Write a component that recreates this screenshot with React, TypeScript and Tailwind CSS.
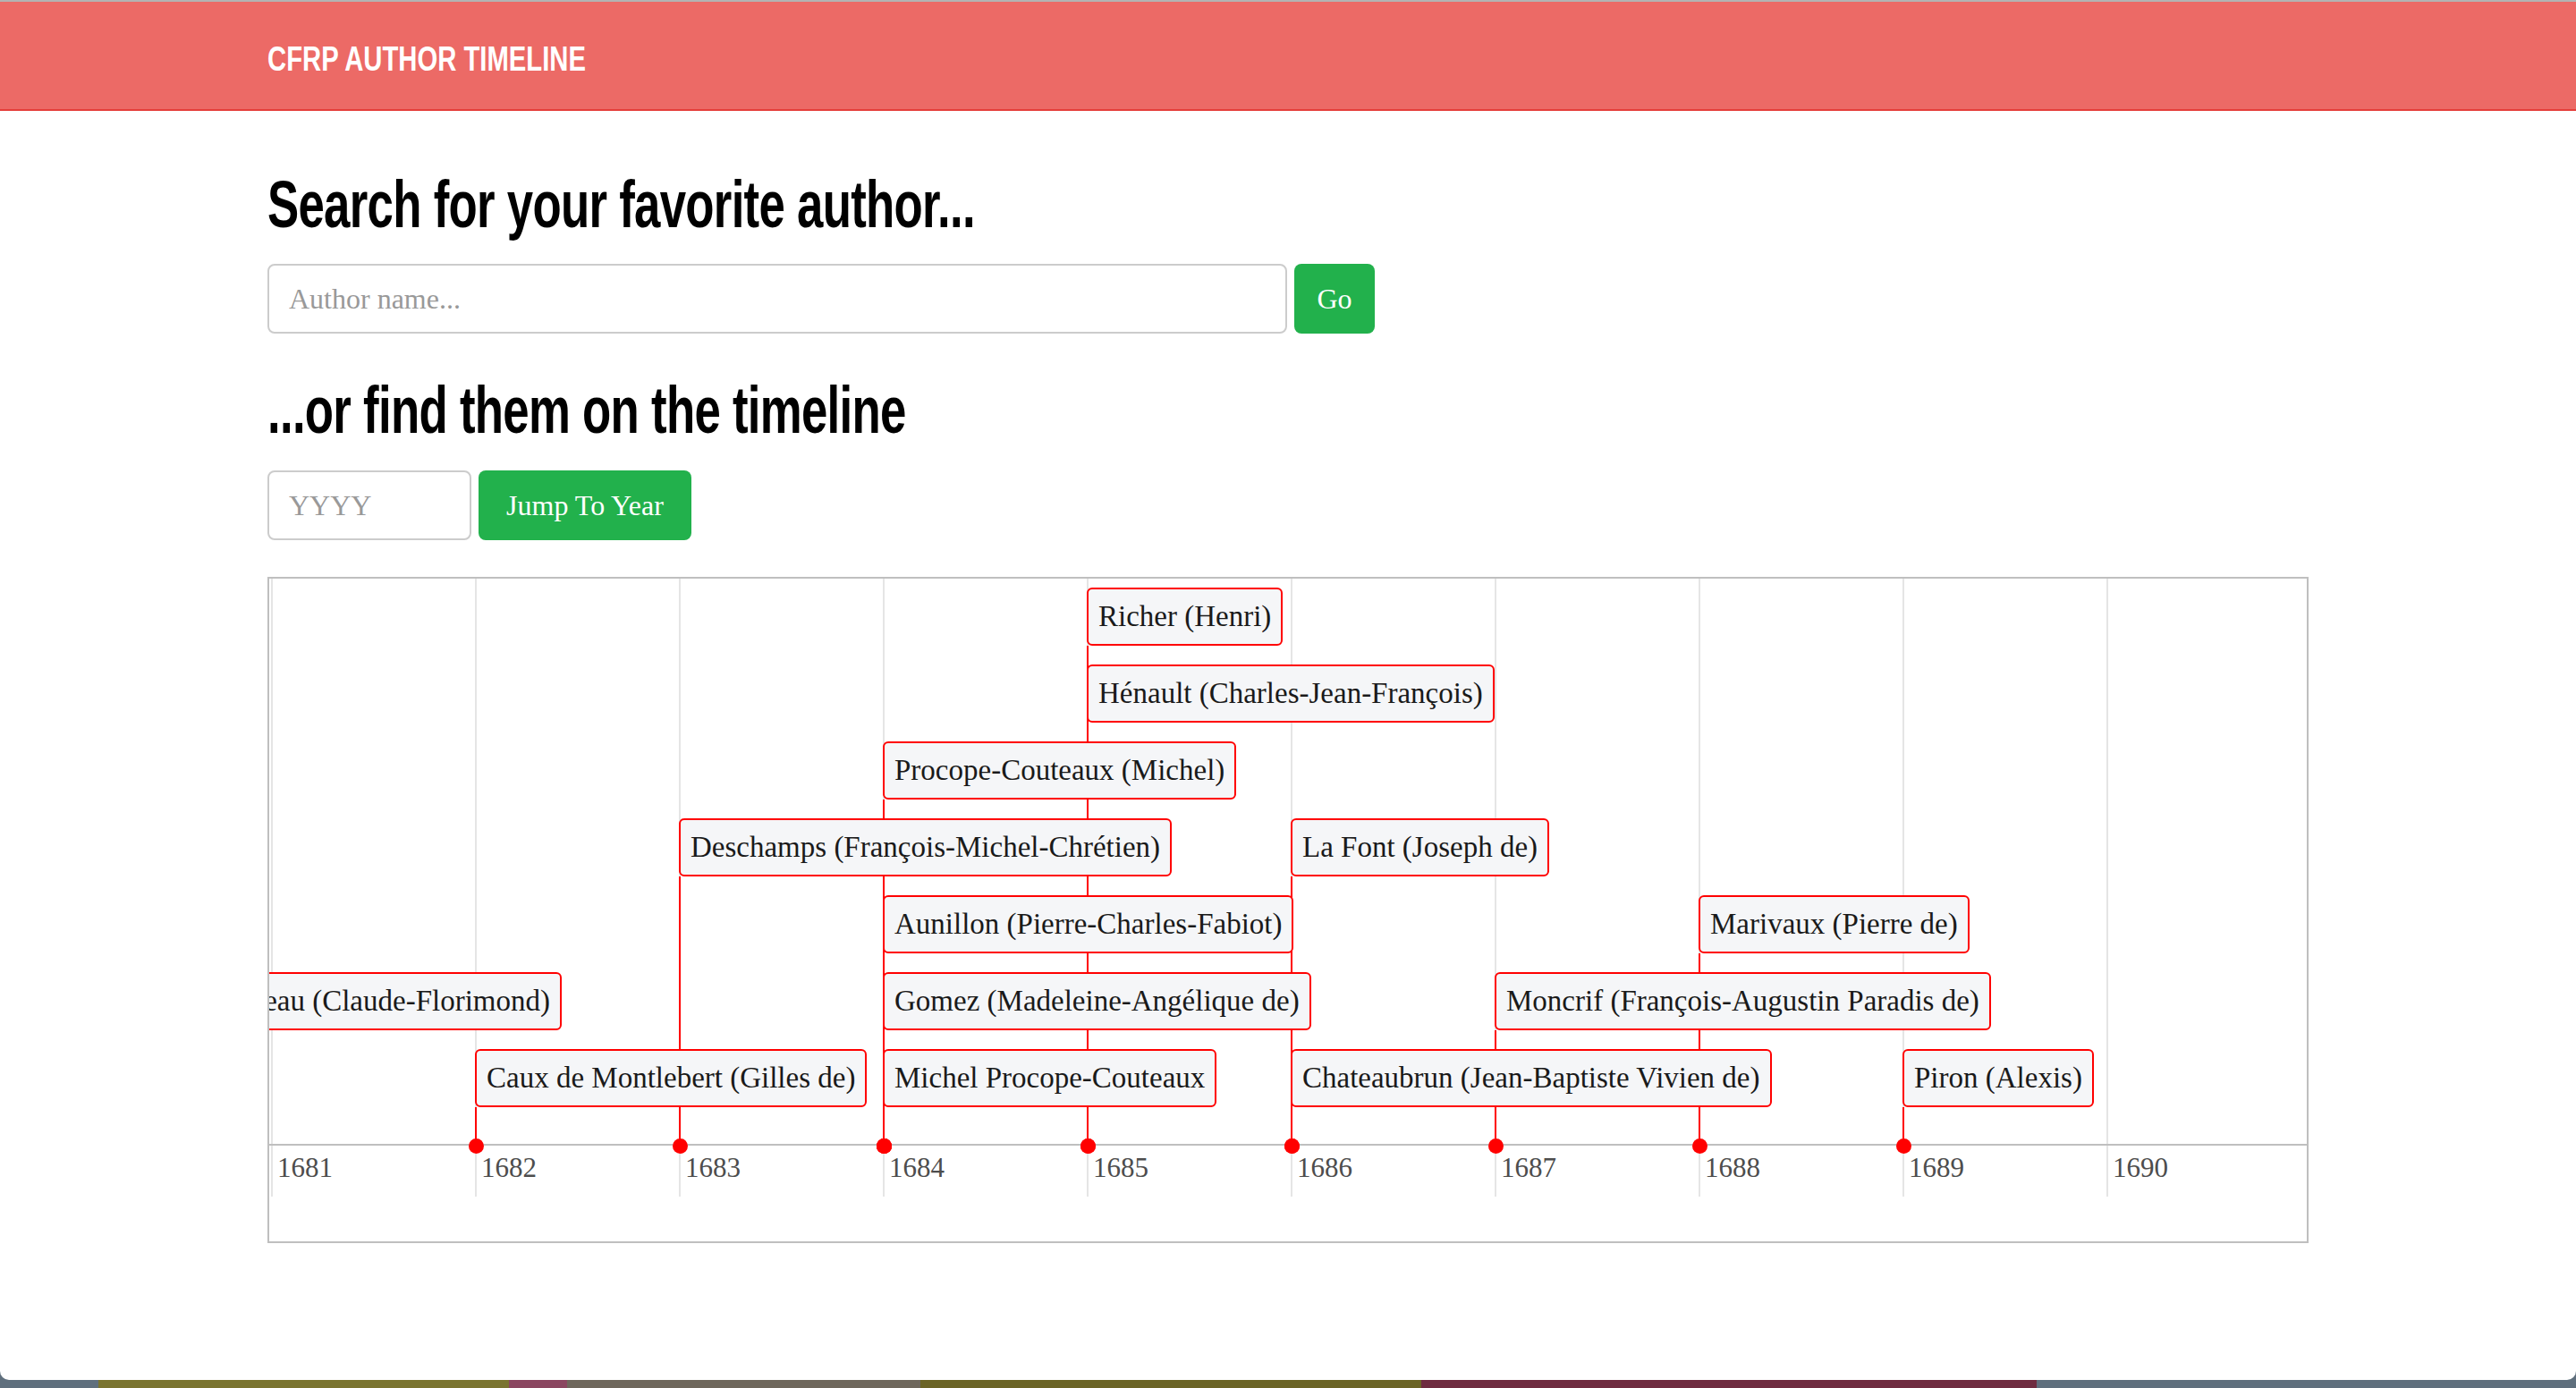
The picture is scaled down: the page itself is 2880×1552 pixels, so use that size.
import React from 'react';

type Item = {
  name: string;
  year: number;
  row: number;
  right?: number;
};

const STEP = 228;
const xOf = (year: number) => 914 + (year - 1685) * STEP;
const rowTop = (row: number) => 10 + 86 * row;
const AXIS = 633;
const BOX_H = 65;

const items: Item[] = [
  { name: 'Richer (Henri)', year: 1685, row: 0 },
  { name: 'Hénault (Charles-Jean-François)', year: 1685, row: 1 },
  { name: 'Procope-Couteaux (Michel)', year: 1684, row: 2 },
  { name: 'Deschamps (François-Michel-Chrétien)', year: 1683, row: 3 },
  { name: 'La Font (Joseph de)', year: 1686, row: 3 },
  { name: 'Aunillon (Pierre-Charles-Fabiot)', year: 1684, row: 4 },
  { name: 'Marivaux (Pierre de)', year: 1688, row: 4 },
  { name: 'Boizard de Ponteau (Claude-Florimond)', year: 1680, row: 5, right: 1951 },
  { name: 'Gomez (Madeleine-Angélique de)', year: 1684, row: 5 },
  { name: 'Moncrif (François-Augustin Paradis de)', year: 1687, row: 5 },
  { name: 'Caux de Montlebert (Gilles de)', year: 1682, row: 6 },
  { name: 'Michel Procope-Couteaux', year: 1684, row: 6 },
  { name: 'Chateaubrun (Jean-Baptiste Vivien de)', year: 1686, row: 6 },
  { name: 'Piron (Alexis)', year: 1689, row: 6 },
];

const years = [1681, 1682, 1683, 1684, 1685, 1686, 1687, 1688, 1689, 1690];

function Timeline() {
  return (
    <div className="relative h-[745px] border-2 border-[#bfbfbf] overflow-hidden bg-white">
      {/* grid */}
      {years.map((y) => (
        <div
          key={`g${y}`}
          className="absolute top-0 w-[2px] h-[691px] bg-[#e5e5e5]"
          style={{ left: xOf(y) }}
        />
      ))}

      {/* axis */}
      <div className="absolute left-0 right-0 h-[2px] bg-[#bfbfbf] top-[632px]" />

      {years.map((y) => (
        <div
          key={`l${y}`}
          className="absolute top-[639px] text-[31px] leading-[40px] text-[#4d4d4d] [font-family:'Liberation_Serif',serif]"
          style={{ left: xOf(y) + 7 }}
        >
          {y}
        </div>
      ))}

      {/* connectors */}
      {items
        .filter((it) => !it.right)
        .map((it) => {
          const x = xOf(it.year);
          const top = rowTop(it.row) + BOX_H;
          return (
            <React.Fragment key={`c${it.name}`}>
              <div
                className="absolute w-[2px] bg-[#ff0000]"
                style={{ left: x, top, height: AXIS - top }}
              />
              <div
                className="absolute w-[17px] h-[17px] rounded-full bg-[#ff0000]"
                style={{ left: x - 7, top: AXIS - 7 }}
              />
            </React.Fragment>
          );
        })}

      {/* items */}
      {items.map((it) => (
        <div
          key={it.name}
          className="absolute h-[65px] flex items-center px-[11px] border-2 border-[#ff0000] rounded-[6px] bg-[#f5f6f8] whitespace-nowrap text-[33px] text-[#1a1a1a] [font-family:'Liberation_Serif',serif]"
          style={it.right ? { right: it.right, top: rowTop(it.row) } : { left: xOf(it.year), top: rowTop(it.row) }}
        >
          {it.name}
        </div>
      ))}
    </div>
  );
}

export default function App() {
  const heading =
    "text-[74px] leading-[80px] font-bold tracking-[-1px] text-black whitespace-nowrap [font-family:'Liberation_Sans',Arial,sans-serif]";
  const input =
    "h-[78px] border-2 border-[#cccccc] rounded-[8px] pl-[22px] text-[32px] text-[#555] placeholder:text-[#999] outline-none [font-family:'Liberation_Serif',serif]";
  const button =
    "h-[78px] rounded-[8px] bg-[#22b14c] text-white text-[32px] [font-family:'Liberation_Serif',serif]";

  return (
    <div className="w-[2880px] h-[1552px] flex flex-col bg-[#5f6f7d] overflow-hidden">
      <div className="flex-1 bg-white rounded-b-[10px] flex flex-col">
        {/* Navbar */}
        <div className="h-[2px] bg-[#b3b3b3]" />
        <div className="h-[122px] bg-[#ec6a66] border-b-2 border-[#e53e3a] flex items-center pt-[8px]">
          <div className="w-[2282px] mx-auto">
            <span className="inline-block origin-left scale-x-[0.77] text-white text-[38px] leading-[44px] font-bold whitespace-nowrap [font-family:'Liberation_Sans',Arial,sans-serif]">
              CFRP AUTHOR TIMELINE
            </span>
          </div>
        </div>

        <div className="w-[2282px] mx-auto flex flex-col">
          <h1 className={`${heading} mt-[65px]`}>
            <span className="inline-block origin-left scale-x-[0.713]">Search for your favorite author...</span>
          </h1>

          <div className="flex gap-[8px] mt-[26px]">
            <input className={`${input} w-[1140px]`} placeholder="Author name..." />
            <button type="button" className={`${button} w-[90px]`}>
              Go
            </button>
          </div>

          <h2 className={`${heading} mt-[46px]`}>
            <span className="inline-block origin-left scale-x-[0.713]">...or find them on the timeline</span>
          </h2>

          <div className="flex gap-[8px] mt-[27px]">
            <input className={`${input} w-[228px]`} placeholder="YYYY" />
            <button type="button" className={`${button} w-[238px]`}>
              Jump To Year
            </button>
          </div>

          <div className="mt-[41px]">
            <Timeline />
          </div>
        </div>
      </div>

      {/* desktop peeking under the window */}
      <div className="h-[9px] flex">
        <div className="w-[110px] bg-[#5f6f7d]" />
        <div className="w-[459px] bg-[#7a7430]" />
        <div className="w-[65px] bg-[#8a4660]" />
        <div className="w-[395px] bg-[#6e675c]" />
        <div className="w-[560px] bg-[#6b6426]" />
        <div className="w-[688px] bg-[#6e2c40]" />
        <div className="flex-1 bg-[#5f6f7d]" />
      </div>
    </div>
  );
}
